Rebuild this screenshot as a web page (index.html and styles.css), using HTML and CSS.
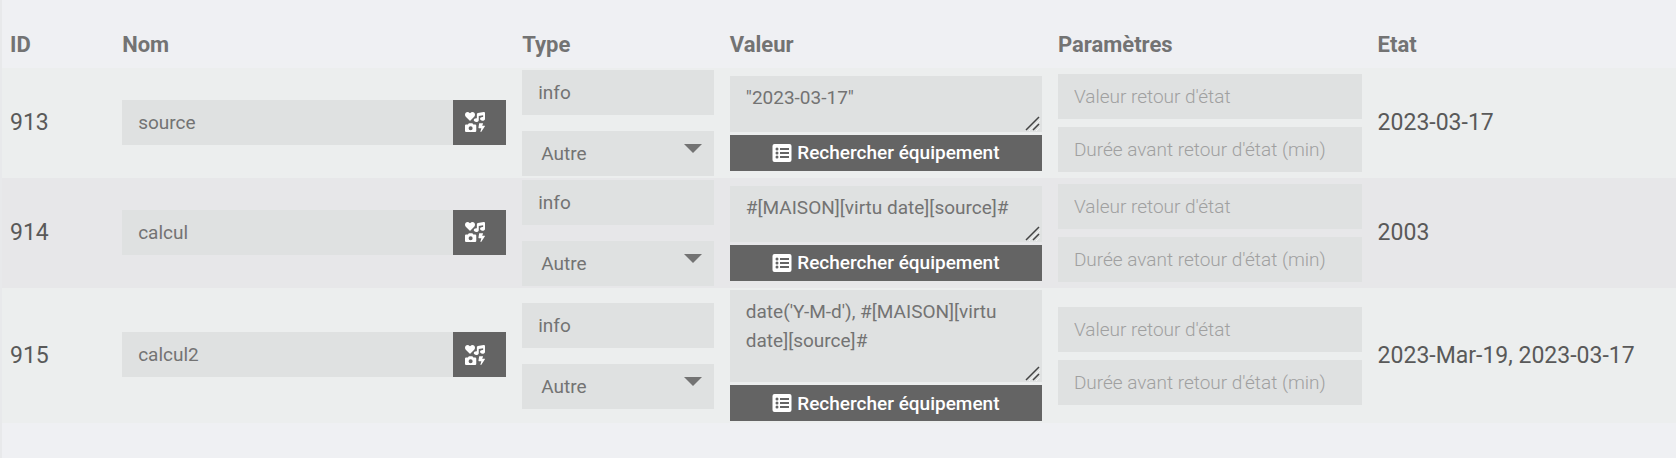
FILE: index.html
```
<!DOCTYPE html>
<html lang="fr">
<head>
<meta charset="utf-8">
<meta name="viewport" content="width=device-width, initial-scale=1">
<title>Commandes</title>
<link rel="stylesheet" href="styles.css">
</head>
<body>
<svg class="sprite" aria-hidden="true">
  <symbol id="icons" viewBox="0 0 512 512">
    <path d="M116.65 219.35a15.68 15.68 0 0 0 22.65 0l96.75-99.83c28.15-29 26.5-77.1-4.91-103.88C203.75-7.7 163-3.5 137.86 22.44L128 32.58l-9.85-10.14C93.05-3.5 52.25-7.7 24.86 15.64c-31.41 26.78-33 74.85-5 103.88zm143.92 100.49h-48l-7.08-14.24a27.39 27.39 0 0 0-25.66-17.78h-71.71a27.39 27.39 0 0 0-25.66 17.78l-7 14.24h-48A27.45 27.45 0 0 0 0 347.3v137.25A27.44 27.44 0 0 0 27.43 512h233.14A27.45 27.45 0 0 0 288 484.55V347.3a27.45 27.45 0 0 0-27.43-27.46zM144 468a52 52 0 1 1 52-52 52 52 0 0 1-52 52zm355.4-115.9h-60.58l22.36-50.75c2.1-6.65-3.93-13.21-12.18-13.21h-75.59c-6.3 0-11.66 3.9-12.5 9.1l-16.8 106.93c-1 6.3 4.88 11.89 12.5 11.89h62.31l-24.2 83c-1.89 6.65 4.2 12.9 12.23 12.9a13.26 13.26 0 0 0 10.92-5.25l92.4-138.91c4.88-6.91-1.16-15.7-10.87-15.7zM478.08.33L329.51 23.17C314.87 25.42 304 38.92 304 54.83V161.6a83.25 83.25 0 0 0-16-1.7c-35.35 0-64 21.48-64 48s28.65 48 64 48c35.2 0 63.73-21.32 64-47.66V99.66l112-17.22v47.18a83.25 83.25 0 0 0-16-1.7c-35.35 0-64 21.48-64 48s28.65 48 64 48c35.2 0 63.73-21.32 64-47.66V32c0-19.48-16-34.42-33.92-31.67z"/>
  </symbol>
  <symbol id="list" viewBox="0 0 20 18">
    <rect x="0.500" width="19" height="18" rx="2"/>
    <g class="cut"><circle cx="5" cy="5" r="1.500"/><circle cx="5" cy="9" r="1.500"/><circle cx="5" cy="13" r="1.500"/><rect x="8" y="4" width="9" height="2"/><rect x="8" y="8" width="9" height="2"/><rect x="8" y="12" width="9" height="2"/></g>
  </symbol>
  <symbol id="caret" viewBox="0 0 18 9"><path d="M0 0h18L9 9z"/></symbol>
  <symbol id="grip" viewBox="0 0 16 16">
    <path class="grip-light" d="M4 15L15 4M11 15L15 11"/>
    <path class="grip-dark" d="M1 14L14 1M8 14L14 8"/>
  </symbol>
</svg>
<main class="panel">
<table class="commands">
  <colgroup><col class="col-id"><col class="col-name"><col class="col-type"><col class="col-value"><col class="col-params"><col></colgroup>
  <thead>
    <tr><th scope="col">ID</th><th scope="col">Nom</th><th scope="col">Type</th><th scope="col">Valeur</th><th scope="col">Paramètres</th><th scope="col">Etat</th></tr>
  </thead>
  <tbody>
    <tr>
      <td>913</td>
      <td><div class="name"><input class="field" type="text" value="source" aria-label="Nom"><button class="icon-btn" type="button" aria-label="Choisir une icône"><svg><use href="#icons"/></svg></button></div></td>
      <td><div class="stack type"><input class="field" type="text" value="info" aria-label="Type"><div class="select"><select class="field" aria-label="Sous-type"><option>Autre</option></select><svg><use href="#caret"/></svg></div></div></td>
      <td><div class="stack value"><div class="area"><textarea class="field" aria-label="Valeur">"2023-03-17"</textarea><svg><use href="#grip"/></svg></div><button class="search" type="button"><svg><use href="#list"/></svg>Rechercher équipement</button></div></td>
      <td><div class="stack"><input class="field" type="text" placeholder="Valeur retour d'état" aria-label="Valeur retour d'état"><input class="field" type="text" placeholder="Durée avant retour d'état (min)" aria-label="Durée avant retour d'état (min)"></div></td>
      <td>2023-03-17</td>
    </tr>
    <tr>
      <td>914</td>
      <td><div class="name"><input class="field" type="text" value="calcul" aria-label="Nom"><button class="icon-btn" type="button" aria-label="Choisir une icône"><svg><use href="#icons"/></svg></button></div></td>
      <td><div class="stack type"><input class="field" type="text" value="info" aria-label="Type"><div class="select"><select class="field" aria-label="Sous-type"><option>Autre</option></select><svg><use href="#caret"/></svg></div></div></td>
      <td><div class="stack value"><div class="area"><textarea class="field" aria-label="Valeur">#[MAISON][virtu date][source]#</textarea><svg><use href="#grip"/></svg></div><button class="search" type="button"><svg><use href="#list"/></svg>Rechercher équipement</button></div></td>
      <td><div class="stack"><input class="field" type="text" placeholder="Valeur retour d'état" aria-label="Valeur retour d'état"><input class="field" type="text" placeholder="Durée avant retour d'état (min)" aria-label="Durée avant retour d'état (min)"></div></td>
      <td>2003</td>
    </tr>
    <tr>
      <td>915</td>
      <td><div class="name"><input class="field" type="text" value="calcul2" aria-label="Nom"><button class="icon-btn" type="button" aria-label="Choisir une icône"><svg><use href="#icons"/></svg></button></div></td>
      <td><div class="stack type"><input class="field" type="text" value="info" aria-label="Type"><div class="select"><select class="field" aria-label="Sous-type"><option>Autre</option></select><svg><use href="#caret"/></svg></div></div></td>
      <td><div class="stack value"><div class="area"><textarea class="field tall" aria-label="Valeur">date('Y-M-d'), #[MAISON][virtu date][source]#</textarea><svg><use href="#grip"/></svg></div><button class="search" type="button"><svg><use href="#list"/></svg>Rechercher équipement</button></div></td>
      <td><div class="stack"><input class="field" type="text" placeholder="Valeur retour d'état" aria-label="Valeur retour d'état"><input class="field" type="text" placeholder="Durée avant retour d'état (min)" aria-label="Durée avant retour d'état (min)"></div></td>
      <td>2023-Mar-19, 2023-03-17</td>
    </tr>
  </tbody>
</table>
</main>
</body>
</html>
```
FILE: styles.css
```
*, *::before, *::after { box-sizing: border-box; }
body {
  margin: 0;
  background: #eff0f3;
  color: #595959;
  font: 400 23px/30px Roboto, "Liberation Sans", sans-serif;
}
.sprite { position: absolute; width: 0; height: 0; }
.panel { min-height: 100vh; border-left: 2px solid #e8e9eb; }
.commands { width: 100%; table-layout: fixed; border-collapse: collapse; }
.col-id { width: 6.7%; }
.col-name { width: 23.9%; }
.col-type { width: 12.4%; }
.col-value { width: 19.6%; }
.col-params { width: 19.1%; }
th { padding: 30px 8px 8px; color: #737373; font-size: 22px; font-weight: 700; text-align: left; }
td { padding: 2px 8px; vertical-align: middle; }
tbody tr { background: #e7e7e9; }
tbody tr:nth-child(odd) { background: #eceeee; }

.field {
  display: block;
  width: 100%;
  height: 45px;
  margin: 0;
  padding: 0 16px;
  border: 0;
  border-radius: 0;
  outline: 0;
  background: #dfe1e1;
  color: #737373;
  font: 400 19px/29px Roboto, "Liberation Sans", sans-serif;
  appearance: none;
}
.field::placeholder { color: #a0a0a0; font-weight: 300; opacity: 1; }
.name { display: flex; margin-bottom: 2px; }
.icon-btn {
  flex: none;
  width: 53px;
  padding: 0 0 0 12px;
  border: 0;
  background: #646464;
  color: #fff;
}
.icon-btn svg { display: block; width: 20px; height: 20px; fill: currentColor; }
.stack { display: grid; gap: 8px; }
.stack.type { gap: 16px; }
.stack.value { gap: 3px; }
.select, .area { position: relative; }
.select .field { padding: 0 40px 0 19px; }
.select svg { position: absolute; top: 13px; right: 12px; width: 18px; height: 9px; fill: #737373; pointer-events: none; }
.area .field { height: 56px; padding: 7px 16px; resize: none; overflow: hidden; }
.area .field.tall { height: 92px; }
.area svg { position: absolute; right: 1px; bottom: 0; width: 16px; height: 16px; fill: none; pointer-events: none; }
.grip-light { stroke: #f5f5f5; }
.grip-dark { stroke: #444; stroke-width: 1.5; }
.search {
  display: flex;
  align-items: center;
  justify-content: center;
  gap: 5px;
  height: 36px;
  padding: 0;
  border: 0;
  background: #646464;
  color: #fff;
  font: 500 19px/29px Roboto, "Liberation Sans", sans-serif;
}
.search svg { width: 20px; height: 18px; fill: currentColor; }
.cut { fill: #646464; }
```
